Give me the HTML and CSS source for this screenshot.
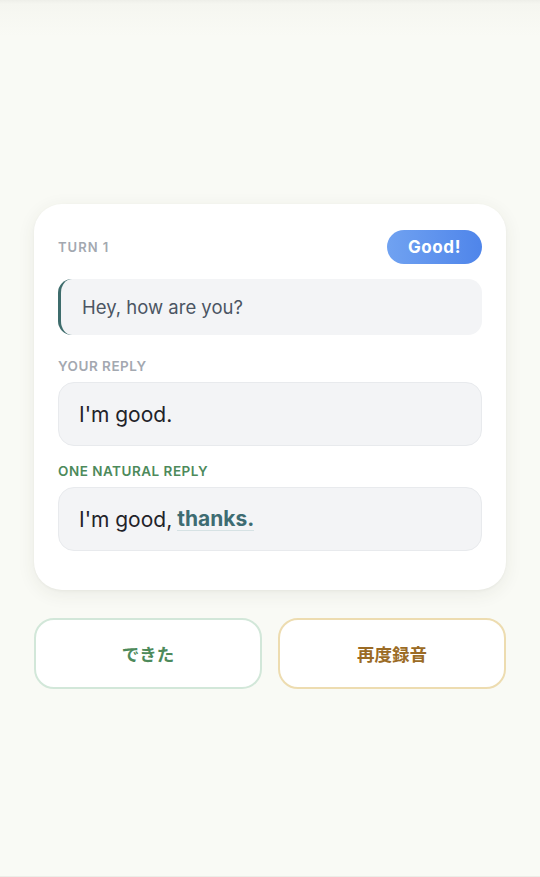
FILE: index.html
```html
<!DOCTYPE html>
<html lang="ja">
<head>
    <meta charset="utf-8">
    <meta name="viewport" content="width=device-width, initial-scale=1.0">
    <title>Turn 1</title>
    <link rel="stylesheet" href="styles.css">
</head>
<body>
    <main class="screen">
        <section class="turn-card">
            <div class="turn-head">
                <span class="turn-label">TURN 1</span>
                <span class="badge">Good!</span>
            </div>

            <div class="prompt">Hey, how are you?</div>

            <div class="field-label">YOUR REPLY</div>
            <div class="reply">I'm good.</div>

            <div class="field-label natural">ONE NATURAL REPLY</div>
            <div class="reply">I'm good, <span class="hl">thanks.</span></div>
        </section>

        <div class="actions">
            <button class="btn done">できた</button>
            <button class="btn retry">再度録音</button>
        </div>
    </main>
</body>
</html>
```

FILE: styles.css
```css
* {
    box-sizing: border-box;
}

body {
    margin: 0;
    min-height: 100vh;
    background: linear-gradient(#eeefe9 0, #f5f6f0 4px, #f9faf5 36px, #f9faf5 100%);
    border-bottom: 1px solid #ecede7;
    font-family: 'Inter', 'Noto Sans CJK JP', sans-serif;
    color: #1f2937;
}

.screen {
    padding: 204px 34px 0;
}

.turn-card {
    background: #fff;
    border-radius: 28px;
    padding: 26px 24px 39px;
    box-shadow: 0 4px 18px rgba(60, 60, 40, 0.08), 0 1px 3px rgba(0, 0, 0, 0.04);
}

.turn-head {
    display: flex;
    justify-content: space-between;
    align-items: center;
    height: 34px;
}

.turn-label {
    font-size: 13px;
    font-weight: 600;
    letter-spacing: 1px;
    color: #a3a8b0;
}

.badge {
    width: 95px;
    height: 34px;
    border-radius: 17px;
    background: linear-gradient(90deg, #70a2f1, #4f85ea);
    color: #fff;
    font-size: 17px;
    font-weight: 700;
    letter-spacing: 0.6px;
    display: flex;
    align-items: center;
    justify-content: center;
}

.prompt {
    margin-top: 15px;
    height: 56px;
    background: #f3f4f6;
    border-radius: 14px;
    border-left: 3px solid #3e6c6c;
    padding-left: 21px;
    display: flex;
    align-items: center;
    font-size: 18.5px;
    color: #4b5563;
}

.field-label {
    margin: 23px 0 8px;
    font-size: 13.5px;
    font-weight: 600;
    letter-spacing: 0.5px;
    color: #a3a8b0;
    line-height: 16px;
}

.field-label.natural {
    margin-top: 17px;
    color: #4d8a5b;
}

.reply {
    height: 64px;
    background: #f3f4f6;
    border: 1px solid #e8eaed;
    border-radius: 16px;
    padding-left: 20px;
    display: flex;
    align-items: center;
    font-size: 21px;
    color: #1f2329;
}

.hl {
    margin-left: 5px;
    font-weight: 700;
    color: #3e6c72;
    border-bottom: 1px solid #d6e2e4;
    line-height: 23px;
}

.actions {
    display: flex;
    gap: 16px;
    margin-top: 28px;
}

.btn {
    flex: 1;
    height: 71px;
    background: #fff;
    border-radius: 20px;
    font-family: 'Noto Sans CJK JP', sans-serif;
    font-size: 17.5px;
    font-weight: 700;
    cursor: pointer;
}

.btn.done {
    border: 2px solid #d2e7d9;
    color: #4d8a5b;
}

.btn.retry {
    border: 2px solid #eddcb0;
    color: #9b6b25;
}
```
